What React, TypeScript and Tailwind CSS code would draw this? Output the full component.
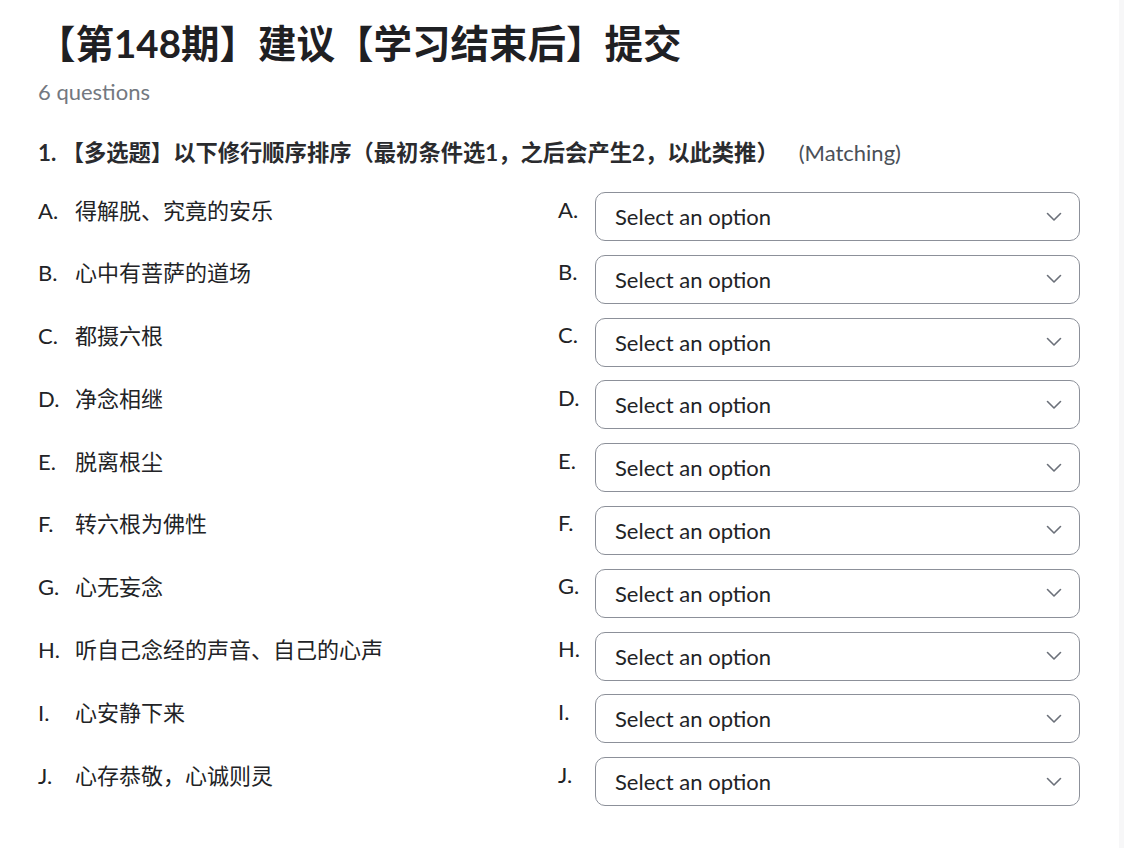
import React from "react";

const items = [
  ["A.", "得解脱、究竟的安乐"],
  ["B.", "心中有菩萨的道场"],
  ["C.", "都摄六根"],
  ["D.", "净念相继"],
  ["E.", "脱离根尘"],
  ["F.", "转六根为佛性"],
  ["G.", "心无妄念"],
  ["H.", "听自己念经的声音、自己的心声"],
  ["I.", "心安静下来"],
  ["J.", "心存恭敬，心诚则灵"],
];

const font = { fontFamily: 'Lato, "Noto Sans CJK SC", sans-serif' };

function Chevron() {
  return (
    <svg width="16" height="10" viewBox="0 0 16 10" fill="none">
      <path d="M1.5 1.5l6.5 6.5 6.5-6.5" stroke="#6b7079" strokeWidth="1.6" strokeLinecap="round" strokeLinejoin="round" />
    </svg>
  );
}

export default function App() {
  return (
    <div className="flex w-[1124px] h-[848px] bg-white overflow-hidden" style={font}>
      <div className="flex-1 pl-[38px] pr-[39px]">
        <h1 className="text-[38.5px] leading-[46px] font-bold text-[#1f2023] mt-[20px] -ml-[1px]">
          【第148期】建议【学习结束后】提交
        </h1>
        <div className="text-[22px] leading-[28px] text-[#737880] mt-[12px]">6 questions</div>
        <div className="mt-[33px] flex items-baseline leading-[28px]">
          <span className="text-[22.3px] font-bold text-[#2a2b2e]">1. 【多选题】以下修行顺序排序（最初条件选1，之后会产生2，以此类推）</span>
          <span className="ml-[20px] text-[22px] text-[#4b5058]">(Matching)</span>
        </div>
        <div className="mt-[25px] flex flex-col gap-[13.8px]">
          {items.map(([l, t]) => (
            <div key={l} className="flex h-[49px]">
              <div className="flex-1 flex text-[22px] leading-[30px] text-[#222326] pt-[3.5px]">
                <span className="w-[37px]">{l}</span>
                <span>{t}</span>
              </div>
              <div className="w-[37px] text-[22px] leading-[30px] text-[#222326] pt-[2.5px]">{l}</div>
              <div className="w-[485px] h-[49px] border border-[#8c9099] rounded-[10px] flex items-center justify-between pl-[19px] pr-[17px]">
                <span className="text-[22px] text-[#222326]">Select an option</span>
                <Chevron />
              </div>
            </div>
          ))}
        </div>
      </div>
      <div className="w-[5px] h-full bg-[#f7f7f8]" />
    </div>
  );
}
